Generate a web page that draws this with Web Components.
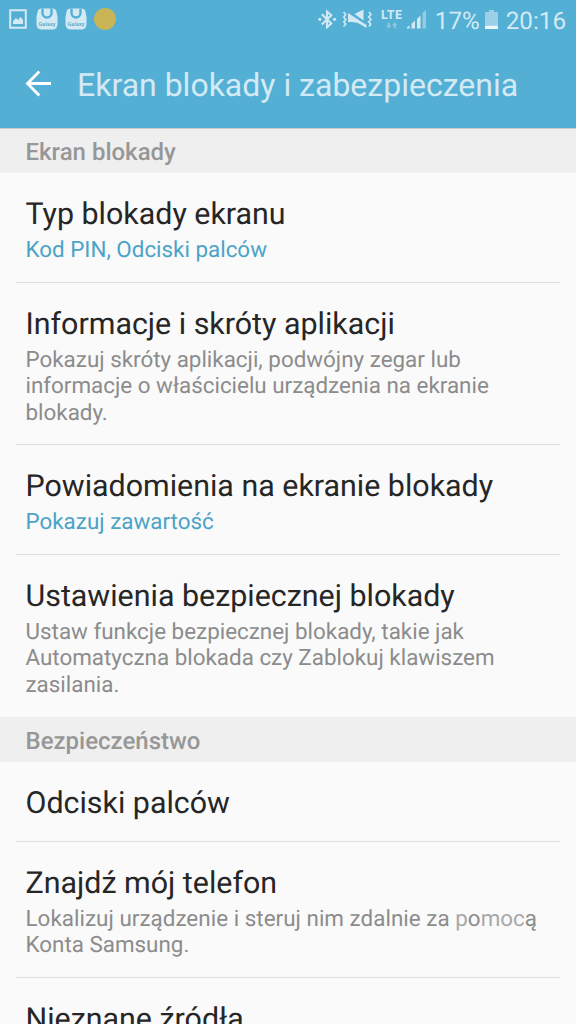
<!DOCTYPE html>
<html lang="pl">
<head>
<meta charset="utf-8">
<title>Ekran blokady i zabezpieczenia</title>
<style>
html,body{margin:0;height:100%;overflow:hidden;background:#fafafa}
body{font-family:Roboto,"Liberation Sans",sans-serif;text-rendering:geometricPrecision}
</style>
</head>
<body>
<settings-screen></settings-screen>
<script>
function define(name, markup){
  customElements.define(name, class extends HTMLElement{
    constructor(){
      super();
      const t=document.createElement('template');
      t.innerHTML=markup;
      this.attachShadow({mode:'open'}).append(t.content.cloneNode(true));
    }
  });
}
define('galaxy-icon',`
<style>:host{display:block;width:22px;height:22px}svg{display:block}</style>
<svg width="22" height="22" viewBox="0 0 22 22"><path d="M5 .5H17Q19.5 .5 20.3 3L21.5 9V16Q21.5 21.5 16 21.5H6Q.5 21.5 .5 16V9L1.7 3Q2.5 .5 5 .5Z" fill="#d3eaf4"/><path d="M6.5 .5V5A4.5 4.5 0 0 0 15.5 5V.5" fill="none" stroke="#54afd5" stroke-width="2.4"/><text x="11" y="17.6" text-anchor="middle" font-family="Roboto,sans-serif" font-size="5.5" font-weight="500" fill="#54a6c8" textLength="17">Galaxy</text></svg>`);
define('status-bar',`
<style>
:host{display:flex;height:38px;box-sizing:border-box;padding:0 10px 0 9px;align-items:center;color:#d3eaf4}
svg{display:block;flex:none}
.left,.right{display:flex;align-items:center}
.right{margin-left:auto}
.left{gap:7px}
.left svg{margin-right:2px}
.dot{width:22px;height:22px;border-radius:50%;background:#c9b456}
span{font-size:24.2px;line-height:38px;white-space:nowrap;padding-top:3px;height:38px}
.pct{margin-left:8px}
</style>
<div class="left">
<svg width="18" height="20" viewBox="0 0 18 20"><path d="M1.2 1.2H16.8V18.8H1.2Z" fill="none" stroke="#d3eaf4" stroke-width="2"/><path d="M4 15V12L7 9L9 11L11.5 8L14 11V15Z" fill="#d3eaf4"/></svg>
<galaxy-icon></galaxy-icon><galaxy-icon></galaxy-icon><div class="dot"></div>
</div>
<div class="right">
<svg width="109" height="26" viewBox="319 6 109 26">
<g fill="none" stroke="#d3eaf4" stroke-width="1.8"><path d="M322.8 14.3L332.3 23.5L328 27.2V11.5L332.3 15.2L322.8 24.5" stroke-width="2.1"/><path d="M344.5 12l2.3 2.5-2 2.5 2 2.5-2 2.5 2 2-2.3 2.5M370 12l2 2.5-2.3 2.5 2.3 2.5-2.3 2.5 2 2-1.7 2.5" stroke-width="1.6"/></g>
<g fill="#d3eaf4"><circle cx="320.8" cy="19.3" r="1.6"/><circle cx="335.5" cy="19.3" r="1.6"/><path d="M349 13L367.5 25V28L359 23L353.5 22H349ZM355.5 14L364.5 9.5V20.5Z"/><path d="M408 28.5V27.2L410.6 25.5V28.5ZM412.5 28.5V23.8L416 20.5V28.5ZM418 28.5V19L421.5 15.5V28.5Z"/></g>
<path d="M423.5 28.5V13L427 10V28.5Z" fill="#91cbe4"/>
<text x="382" y="19.3" font-family="Roboto,sans-serif" font-size="12.5" font-weight="700" fill="#d3eaf4" textLength="21">LTE</text>
<path d="M388.8 22.5H390.6V25.5H392.5L389.7 28.5L387 25.5H388.8ZM394.8 28.2H396.6V25.2H398.4L395.7 22.2L393 25.2H394.8Z" fill="#8fc9e2"/>
</svg>
<span class="pct">17%</span>
<svg width="13" height="19" viewBox="0 0 13 19" style="margin:0 8px 0 5px"><path d="M0 2H4V0H9V2H13V19H0Z" fill="#9bd0e6"/><path d="M0 15.8H13V19H0Z" fill="#eef7fb"/></svg>
<span>20:16</span>
</div>`);
define('app-bar',`
<style>
:host{display:flex;height:90px;box-sizing:border-box;padding:0 0 0 25px;color:#d3eaf4}
svg{flex:none;margin:32px 25px 0 0;display:block}
h1{margin:0;font-weight:400;font-size:32px;line-height:38px;padding-top:28px;white-space:nowrap}
</style>
<svg width="27" height="27" viewBox="0 0 27 27"><path d="M14.3 1.5L2.5 13.5L14.3 25.5M2.5 13.5H26" fill="none" stroke="#fff" stroke-width="2.8"/></svg>
<h1><slot></slot></h1>`);
define('section-header',`
<style>
:host{display:block;height:45px;box-sizing:border-box;padding:0 25.5px;background:#efefef;color:#979797;font-size:24px;line-height:49px;font-weight:500}
:host([first]){border-top:1px solid #c9cccd;line-height:47px}
</style><slot></slot>`);
define('settings-item',`
<style>
:host{display:block;box-sizing:border-box;height:var(--h);padding:24px 0 0 25.5px;position:relative}
:host([line]) .rule{height:1px;background:#dedede;position:absolute;left:16px;right:16px;bottom:0}
.title{font-size:30.4px;line-height:36px;color:#262626;white-space:nowrap}
.sub{font-size:22.4px;line-height:26.4px;color:#8c8c8c;white-space:nowrap;padding-top:4px}
:host([active]) .sub{color:#4ba3c7}
</style>
<div class="title"><slot name="title"></slot></div><div class="sub"><slot></slot></div><div class="rule"></div>`);
define('settings-screen',`
<style>
:host{display:block;width:576px;height:1024px;overflow:hidden;background:#fafafa}
header{background:#54afd5}
.wide{letter-spacing:.03px}
.fade{color:#a8a8a8}
</style>
<header><status-bar></status-bar><app-bar>Ekran blokady i zabezpieczenia</app-bar></header>
<section-header first>Ekran blokady</section-header>
<settings-item line active style="--h:110px"><span slot="title">Typ blokady ekranu</span>Kod PIN, Odciski palców</settings-item>
<settings-item line style="--h:162px"><span slot="title">Informacje i skróty aplikacji</span>Pokazuj skróty aplikacji, podwójny zegar lub<br>informacje o właścicielu urządzenia na ekranie<br>blokady.</settings-item>
<settings-item line active style="--h:110px"><span slot="title">Powiadomienia na ekranie blokady</span>Pokazuj zawartość</settings-item>
<settings-item style="--h:162px"><span slot="title">Ustawienia bezpiecznej blokady</span>Ustaw funkcje bezpiecznej blokady, takie jak<br>Automatyczna blokada czy Zablokuj klawiszem<br>zasilania.</settings-item>
<section-header>Bezpieczeństwo</section-header>
<settings-item line style="--h:79.5px"><span slot="title">Odciski palców</span></settings-item>
<settings-item line style="--h:136.5px"><span slot="title">Znajdź mój telefon</span><span class="wide">Lokalizuj urządzenie i steruj nim zdalnie za <span class="fade">p</span>o<span class="fade">moc</span>ą</span><br>Konta Samsung.</settings-item>
<settings-item style="--h:79px"><span slot="title">Nieznane źródła</span></settings-item>`);
</script>
</body>
</html>
